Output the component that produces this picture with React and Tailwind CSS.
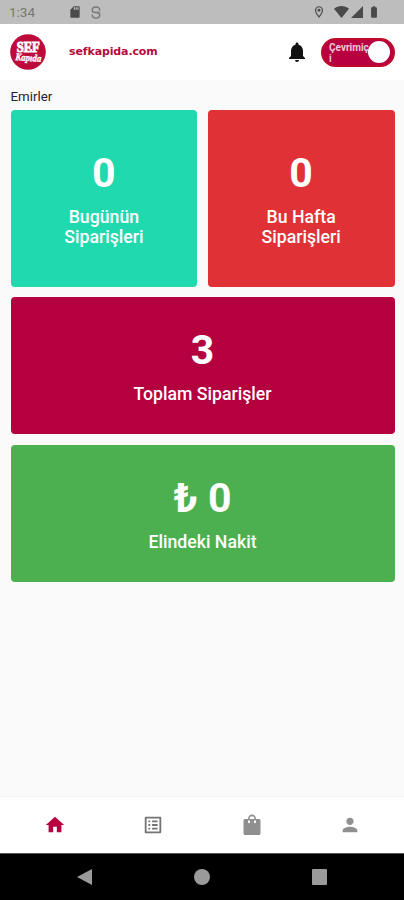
import {
  MdBatteryFull,
  MdHome,
  MdListAlt,
  MdNotifications,
  MdOutlineLocationOn,
  MdPerson,
  MdSdCard,
} from "react-icons/md";

const StatusBar = () => {
  return (
    <div className="h-6 shrink-0 flex items-center bg-[#bdbdbd] pl-[9px] pr-6 text-[#4a4a4a]">
      <span className="w-[59px] text-[13.5px] leading-none pt-0.5 text-[#777777]">1:34</span>
      <MdSdCard className="w-[14px] h-[14px]" />
      <svg className="w-[10px] h-[13px] ml-[9px]" viewBox="0 0 10 14" fill="none" stroke="#777777" strokeWidth="1.5">
        <path d="M9 5V4.200C9 2.200 7.500 1 5 1S1 2.200 1 4.200 2.500 7 5 7s4 .9 4 3-1.500 3-4 3-4-1-4-3v-.8M3 7h6" />
      </svg>
      <div className="ml-auto flex items-center">
        <MdOutlineLocationOn className="w-[14px] h-[14px] mr-[8px]" />
        <svg className="w-[15px] h-3 mr-[2px]" viewBox="0 0 15 12" fill="currentColor">
          <path d="M7.5 12 0 2.8C4.4-.9 10.600-.9 15 2.800z" />
        </svg>
        <svg className="w-3 h-3 mr-[4px]" viewBox="0 0 12 12" fill="currentColor">
          <path d="M12 0v12H0z" />
        </svg>
        <MdBatteryFull className="w-[14px] h-[14px] -mr-[1px]" />
      </div>
    </div>
  );
};

const Logo = () => {
  return (
    <svg className="w-9 h-9" viewBox="0 0 36 36">
      <circle cx="18" cy="18" r="17.8" fill="#bd0b3c" />
      <text
        x="18.2"
        y="17.5"
        textAnchor="middle"
        textLength="23"
        lengthAdjust="spacingAndGlyphs"
        fill="#fff"
        stroke="#fff"
        strokeWidth="1"
        className="font-['Liberation_Serif',serif] text-[14.5px] font-bold"
      >
        SEF
      </text>
      <text
        x="18.3"
        y="27"
        textAnchor="middle"
        textLength="26"
        lengthAdjust="spacingAndGlyphs"
        fill="#fff"
        stroke="#fff"
        strokeWidth="0.4"
        transform="rotate(4 18 25)"
        className="font-['Liberation_Serif',serif] text-[10px] font-bold italic"
      >
        Kapıda
      </text>
    </svg>
  );
};

const Header = () => {
  return (
    <header className="h-14 shrink-0 flex items-center bg-white pl-[10px] pr-[9px]">
      <Logo />
      <span className="ml-[23px] font-['DejaVu_Sans',sans-serif] text-[11px] font-bold tracking-[-0.12px] text-[#b60a3c]">
        sefkapida.com
      </span>
      <MdNotifications className="ml-auto w-6 h-6 text-[#111111]" />
      <button className="relative ml-3 w-[74px] h-[29px] rounded-full bg-[#b80040] border-2 border-[#c00a2c] text-left">
        <span className="absolute left-[6px] top-[2px] w-10 text-[10px] leading-[11px] font-bold text-[#f3c9d6]">
          Çevrimiç
          <br />i
        </span>
        <span className="absolute right-[3px] top-[1.5px] w-[22px] h-[22px] rounded-full bg-white"></span>
      </button>
    </header>
  );
};

const BagIcon = ({ className }) => {
  return (
    <svg className={className} viewBox="0 0 22 22" fill="currentColor">
      <path
        fillRule="evenodd"
        d="M4 5H7a4 4.500 0 0 1 8 0h3q1.500 0 1.500 1.500v13q0 1.500-1.500 1.500H4q-1.500 0-1.500-1.500v-13Q2.500 5 4 5zM8.600 5h4.800a2.400 2.800 0 0 0-4.800 0zM7 6.500v1.700a1 1 0 0 0 2 0V6.500zM13 6.500v1.700a1 1 0 0 0 2 0V6.500z"
      />
    </svg>
  );
};

const StatCard = ({ value, label, className }) => {
  return (
    <div className={`flex flex-col items-center justify-center rounded-[4px] text-white text-center ${className}`}>
      <div className="text-[41px] leading-[48px] font-bold">{value}</div>
      <div className="mt-[10px] text-[17.7px] leading-[20.5px] font-medium whitespace-pre-line">{label}</div>
    </div>
  );
};

const tabs = [
  { name: "home", Icon: MdHome, color: "text-[#b80040]" },
  { name: "orders", Icon: MdListAlt, color: "text-[#757575]" },
  { name: "bag", Icon: BagIcon, color: "text-[#8f8f8f]" },
  { name: "profile", Icon: MdPerson, color: "text-[#8f8f8f]" },
];

const App = () => {
  return (
    <div className="w-full h-screen flex flex-col bg-[#fafafa] font-[Roboto,sans-serif] overflow-hidden">
      <StatusBar />
      <Header />
      <main className="flex-1 pl-[10.5px] pr-[9.5px] pt-[9px]">
        <h1 className="h-[21px] text-[13.3px] leading-4 text-[#222222]">Emirler</h1>
        <div className="flex flex-col gap-[10.5px]">
          <div className="grid grid-cols-2 gap-[10.5px]">
            <StatCard value="0" label={"Bugünün\nSiparişleri"} className="h-[176.5px] bg-[#20d9ae]" />
            <StatCard value="0" label={"Bu Hafta\nSiparişleri"} className="h-[176.5px] bg-[#e03136]" />
          </div>
          <StatCard value="3" label="Toplam Siparişler" className="h-[137px] bg-[#b50040]" />
          <StatCard value="₺ 0" label="Elindeki Nakit" className="h-[137px] bg-[#4caf50]" />
        </div>
      </main>
      <nav className="h-[57px] shrink-0 flex items-center bg-white border-t border-[#f3f3f3] pl-[5.5px] pr-[4.5px]">
        {tabs.map(({ name, Icon, color }) => (
          <button key={name} aria-label={name} className={`flex-1 flex justify-center ${color}`}>
            <Icon className="w-[22px] h-[22px]" />
          </button>
        ))}
      </nav>
      <div className="h-[47px] shrink-0 flex items-center justify-between bg-black border-t border-[#555555] pl-[77px] pr-[77px]">
        <svg className="w-[15px] h-4" viewBox="0 0 15 16" fill="#9a9a9a">
          <path d="M15 0v16L0 8z" />
        </svg>
        <div className="w-4 h-4 rounded-full bg-[#9a9a9a]"></div>
        <div className="w-[15px] h-4 rounded-[1px] bg-[#9a9a9a]"></div>
      </div>
    </div>
  );
};

export default App;
